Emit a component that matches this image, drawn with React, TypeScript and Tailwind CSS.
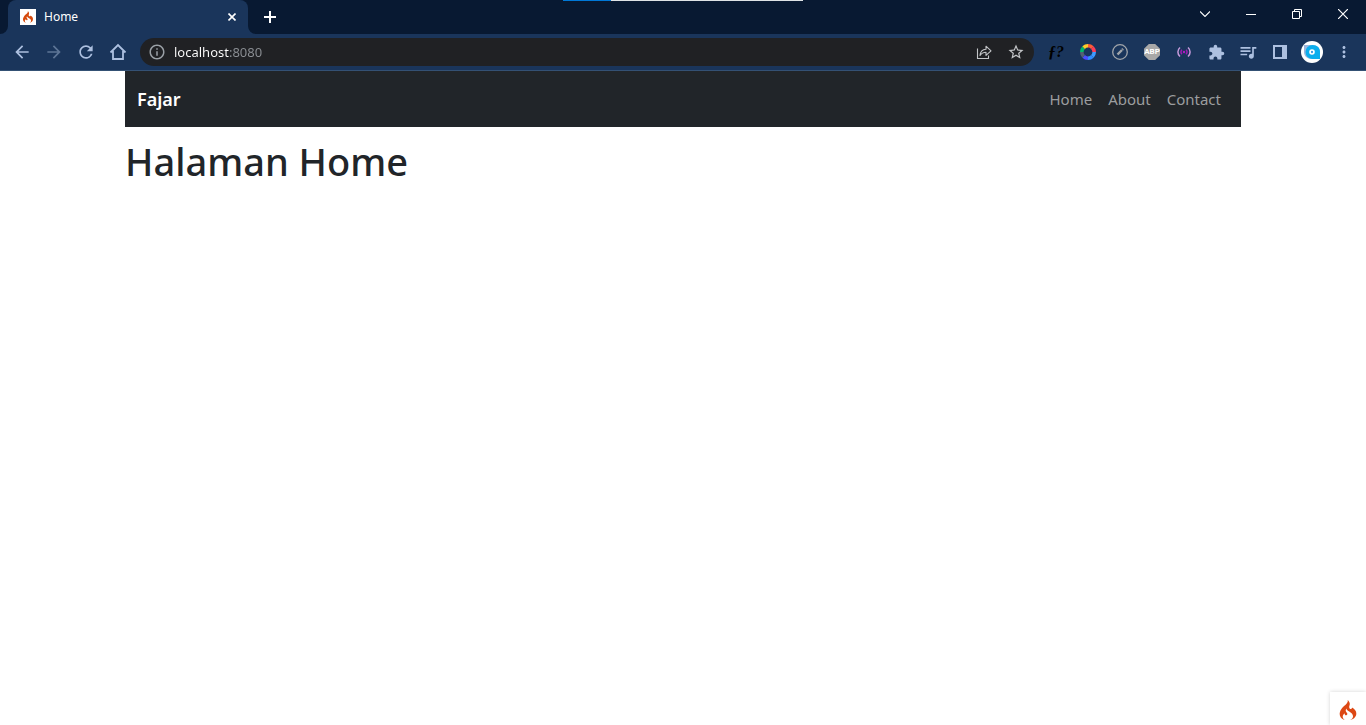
import type { ReactNode } from 'react';
import {
  MdArrowBack,
  MdArrowForward,
  MdExtension,
  MdInfoOutline,
  MdMoreVert,
  MdQueueMusic,
  MdRefresh,
  MdStarOutline,
} from 'react-icons/md';
import { SiCodeigniter } from 'react-icons/si';

function ToolButton({ label, children }: { label: string; children: ReactNode }) {
  return (
    <button type="button" aria-label={label} className="flex h-7 w-8 shrink-0 items-center justify-center">
      {children}
    </button>
  );
}

function WindowButton({ label, children }: { label: string; children: ReactNode }) {
  return (
    <button type="button" aria-label={label} className="flex h-7 w-[46px] items-center justify-center text-white">
      {children}
    </button>
  );
}

function HomeIcon() {
  return (
    <svg width="18" height="18" viewBox="0 0 18 18" fill="none" stroke="currentColor" strokeWidth="1.800">
      <path d="M1.500 9.500 9 2l7.500 7.500M4 8v8h10V8" />
    </svg>
  );
}

function ShareIcon() {
  return (
    <svg width="16" height="16" viewBox="0 0 16 16" fill="none" stroke="currentColor" strokeWidth="1.100">
      <path d="M1.500 4.500v10h11v-3" />
      <path d="M4 11.500c.4-3.800 2.500-6 6-6.200V2.200l5 4.600-5 4.500V8.200C7.500 8.200 5.500 9 4 11.500Z" strokeLinejoin="round" />
    </svg>
  );
}

function ColorWheelIcon() {
  const colors = ['#ff5a36', '#ff3d57', '#3f9bff', '#2f8cff', '#4b4dff', '#536073', '#00b86b', '#ffc928'];
  return (
    <svg width="16" height="16" viewBox="0 0 16 16" fill="none" strokeWidth="3.600">
      {colors.map((color, i) => (
        <circle
          key={color}
          cx="8"
          cy="8"
          r="6.200"
          stroke={color}
          pathLength="8"
          strokeDasharray="1 7"
          transform={`rotate(${i * 45 - 90} 8 8)`}
        />
      ))}
    </svg>
  );
}

function PencilCircleIcon() {
  return (
    <svg width="16" height="16" viewBox="0 0 16 16" fill="none" stroke="#a1a5aa">
      <circle cx="8" cy="8" r="7.300" strokeWidth="1.300" />
      <path d="m5.500 10.500 4.500-4.500" strokeWidth="2.400" />
      <path d="m10.300 5.700.8-.8" strokeWidth="2.400" />
    </svg>
  );
}

function BroadcastIcon() {
  return (
    <svg width="14" height="14" viewBox="0 0 14 14" fill="none" strokeWidth="1.500">
      <path d="M3 2.500C.2 5 .2 9 3 11.500M11 2.500c2.800 2.500 2.800 6.500 0 9" stroke="#c79bdc" />
      <path d="M5 4.800C3.600 6 3.600 8 5 9.200M9 4.800c1.400 1.200 1.400 3.200 0 4.400" stroke="#a01bb5" />
      <circle cx="7" cy="7" r="1.200" fill="#b01bc4" />
    </svg>
  );
}

function SidePanelIcon() {
  return (
    <svg width="14" height="14" viewBox="0 0 14 14">
      <path fill="currentColor" fillRule="evenodd" d="M0 0h14v14H0ZM2 2v10h7V2Z" />
    </svg>
  );
}

function ProfileIcon() {
  return (
    <svg width="22" height="22" viewBox="0 0 22 22">
      <circle cx="11" cy="11" r="11" fill="#fff" />
      <path d="M3 4h7c6 0 9 3 9 7v7h-8c-5 0-8-3-8-7V4Z" fill="#9bb6dc" />
      <path d="M11.500 4c5 0 7.500 3 7.500 7v7h-7.500a7 7 0 0 1 0-14Z" fill="#0caeed" />
      <circle cx="11" cy="11" r="2.800" fill="#fff" />
      <rect x="10.200" y="9.800" width="1.600" height="2.400" rx=".8" fill="#1687d9" />
    </svg>
  );
}

function TabStrip() {
  return (
    <header className="relative flex h-[34px] bg-[#081932]">
      <div aria-hidden="true" className="absolute inset-x-0 top-0 flex justify-center">
        <div className="flex h-px w-60 bg-[#dfe3e6]">
          <span className="w-12 bg-[#0078d7]" />
        </div>
      </div>

      <svg width="8" height="8" viewBox="0 0 8 8" className="self-end text-[#1a355b]">
        <path d="M8 0v8H0a8 8 0 0 0 8-8Z" fill="currentColor" />
      </svg>
      <div className="flex w-60 items-center rounded-t-lg bg-[#1a355b] pr-2 pl-3 text-white">
        <button type="button" className="flex flex-1 items-center gap-2 text-xs">
          <span className="flex size-4 items-center justify-center bg-white">
            <SiCodeigniter size={12} className="text-[#d5490c]" />
          </span>
          Home
        </button>
        <button type="button" aria-label="Close tab" className="flex size-4 items-center justify-center">
          <svg width="8" height="8" viewBox="0 0 8 8" stroke="currentColor" strokeWidth="1.600">
            <path d="m.5.5 7 7m0-7-7 7" />
          </svg>
        </button>
      </div>
      <svg width="8" height="8" viewBox="0 0 8 8" className="self-end text-[#1a355b]">
        <path d="M0 0v8h8a8 8 0 0 1-8-8Z" fill="currentColor" />
      </svg>
      <button type="button" aria-label="New tab" className="flex w-7 items-center justify-center text-white">
        <svg width="12" height="12" viewBox="0 0 12 12" stroke="currentColor" strokeWidth="2">
          <path d="M6 0v12M0 6h12" />
        </svg>
      </button>

      <div className="ml-auto flex">
        <WindowButton label="Search tabs">
          <svg width="10" height="6" viewBox="0 0 10 6" fill="none" stroke="#ffffff" strokeWidth="1.100">
            <path d="m0 .5 5 5 5-5" />
          </svg>
        </WindowButton>
        <WindowButton label="Minimize">
          <svg width="10" height="2" viewBox="0 0 10 2">
            <path d="M0 1h10v1H0Z" fill="currentColor" />
          </svg>
        </WindowButton>
        <WindowButton label="Restore">
          <svg width="10" height="10" viewBox="0 0 10 10" fill="none" stroke="currentColor">
            <path d="M.5 2.500h7v7h-7ZM2.500 2.500v-2h7v7h-2" />
          </svg>
        </WindowButton>
        <WindowButton label="Close">
          <svg width="10" height="10" viewBox="0 0 10 10" stroke="currentColor" strokeWidth="1.200">
            <path d="m0 0 10 10m0-10L0 10" />
          </svg>
        </WindowButton>
      </div>
    </header>
  );
}

function Toolbar() {
  return (
    <div className="flex h-[37px] items-center gap-1.5 border-b border-[#345174] bg-[#1a355b] px-1.5 text-[#adc0e0]">
      <div className="flex">
        <ToolButton label="Back">
          <MdArrowBack size={20} />
        </ToolButton>
        <ToolButton label="Forward">
          <MdArrowForward size={20} className="text-[#5d7596]" />
        </ToolButton>
        <ToolButton label="Reload">
          <MdRefresh size={20} />
        </ToolButton>
        <ToolButton label="Home page">
          <HomeIcon />
        </ToolButton>
      </div>

      <div className="flex h-7 min-w-0 flex-1 items-center rounded-full bg-[#202124] pr-0.5 pl-2 text-[#c3c5c8]">
        <MdInfoOutline size={18} className="mr-2 shrink-0 text-[#9aa0a6]" />
        <input
          type="text"
          aria-label="Address"
          defaultValue="localhost:8080"
          className="min-w-0 flex-1 bg-linear-[90deg,#ffffff_56px,#8c9095_56px] bg-clip-text pt-px text-[13px] text-transparent outline-none"
        />
        <ToolButton label="Share">
          <ShareIcon />
        </ToolButton>
        <ToolButton label="Bookmark">
          <MdStarOutline size={18} />
        </ToolButton>
      </div>

      <div className="flex">
        <button
          type="button"
          className="flex h-7 w-8 items-center justify-center font-['Liberation_Serif',serif] text-base font-bold text-black italic"
        >
          ƒ?
        </button>
        <ToolButton label="Color picker">
          <ColorWheelIcon />
        </ToolButton>
        <ToolButton label="Editor">
          <PencilCircleIcon />
        </ToolButton>
        <button type="button" className="flex h-7 w-8 items-center justify-center">
          <span className="flex size-4 items-center justify-center bg-[#a8a8a8] font-['Roboto',sans-serif] text-[8px] font-bold text-white [clip-path:polygon(30%_0,70%_0,100%_30%,100%_70%,70%_100%,30%_100%,0_70%,0_30%)]">
            ABP
          </span>
        </button>
        <ToolButton label="Broadcast">
          <BroadcastIcon />
        </ToolButton>
        <ToolButton label="Extensions">
          <MdExtension size={17} />
        </ToolButton>
        <ToolButton label="Media">
          <MdQueueMusic size={20} />
        </ToolButton>
        <ToolButton label="Side panel">
          <SidePanelIcon />
        </ToolButton>
        <ToolButton label="Profile">
          <ProfileIcon />
        </ToolButton>
        <ToolButton label="Menu">
          <MdMoreVert size={18} />
        </ToolButton>
      </div>
    </div>
  );
}

const links = ['Home', 'About', 'Contact'];

export default function App() {
  return (
    <div className="flex min-h-screen flex-col bg-white font-['Noto_Sans','Open_Sans',sans-serif] text-[#212529]">
      <TabStrip />
      <Toolbar />
      <main className="mx-auto w-full max-w-[1140px] flex-1 px-3">
        <nav className="flex h-14 items-center justify-between bg-[#212529] px-3">
          <a href="#home" className="text-lg font-semibold text-white">
            Fajar
          </a>
          <ul className="flex text-[15px] text-[#9b9d9f]">
            {links.map((link) => (
              <li key={link}>
                <a href={`#${link.toLowerCase()}`} className="block px-2">
                  {link}
                </a>
              </li>
            ))}
          </ul>
        </nav>
        <h1 className="mt-2.5 text-[38px] leading-12 font-medium">Halaman Home</h1>
      </main>
      <button
        type="button"
        aria-label="Debug toolbar"
        className="fixed right-0 bottom-0 flex h-[33px] w-9 items-end justify-center bg-white pb-[5px] shadow-[0_0_4px_#d4d4d4]"
      >
        <SiCodeigniter size={20} className="text-[#dd4814]" />
      </button>
    </div>
  );
}
